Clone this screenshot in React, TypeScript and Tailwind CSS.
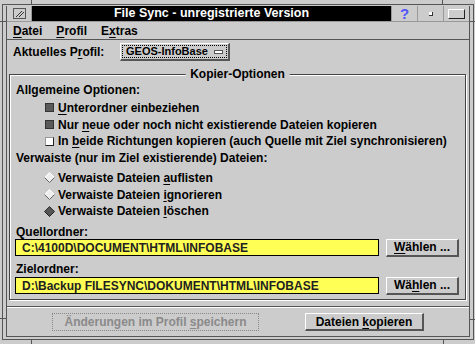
import type { ReactNode } from "react";

function U({ children }: { children: ReactNode }) {
  return <span className="underline decoration-1 underline-offset-[2px]">{children}</span>;
}

function CheckBox({ checked }: { checked: boolean }) {
  if (checked) {
    return <span className="block w-[9px] h-[9px] bg-[#5a5a5a] border border-[#333]" />;
  }
  return (
    <span className="block w-[9px] h-[9px] bg-white border border-t-[#999] border-l-[#999] border-r-[#222] border-b-[#222]" />
  );
}

function Radio({ on }: { on: boolean }) {
  return (
    <svg width="11" height="11" viewBox="0 0 11 11" className="block">
      <polygon points="5.5,0.5 10.5,5.5 5.5,10.5 0.5,5.5" fill={on ? "#555" : "#eeeeee"} />
      <polyline points="0.5,5.5 5.5,0.5 10.5,5.5" fill="none" stroke={on ? "#333" : "#ffffff"} />
      <polyline points="0.5,5.5 5.5,10.5 10.5,5.5" fill="none" stroke={on ? "#222" : "#666"} />
    </svg>
  );
}

const raised =
  "border-t border-l border-r-2 border-b-2 border-t-white border-l-white border-r-[#555] border-b-[#555] bg-[#cccccc]";

const options = [
  { checked: true, label: <><U>U</U>nterordner einbeziehen</> },
  { checked: true, label: <>Nur <U>n</U>eue oder noch nicht existierende Dateien kopieren</> },
  { checked: false, label: <>In <U>b</U>eide Richtungen kopieren (auch Quelle mit Ziel synchronisieren)</> },
];

const orphans = [
  { on: false, label: <>Verwaiste Dateien <U>a</U>uflisten</> },
  { on: false, label: <>Verwaiste Dateien <U>i</U>gnorieren</> },
  { on: true, label: <>Verwaiste Dateien <U>l</U>öschen</> },
];

function FolderRow({ path, button }: { path: string; button: ReactNode }) {
  return (
    <div className="flex items-center gap-[7px] pl-[5px] pr-[6px] h-[17px]">
      <div className="flex-1 h-[17px] bg-[#ffff55] border border-black flex items-center pl-[6px] text-[#222]">
        {path}
      </div>
      <button className={`${raised} w-[73px] h-[18px] flex items-center justify-center`}>
        <span>{button}</span>
      </button>
    </div>
  );
}

export default function App() {
  return (
    <div className="relative w-[475px] h-[344px] bg-[#cccccc] pt-[4px] pl-[2px] pr-[1px] pb-[4px] font-['Liberation_Sans',sans-serif] font-bold text-[12px] leading-none text-black select-none">
      {/* frame corner ticks */}
      <span className="absolute left-[31px] top-0 w-px h-[5px] bg-[#555]" />
      <span className="absolute left-[442px] top-0 w-px h-[5px] bg-[#555]" />
      <span className="absolute left-[31px] bottom-0 w-px h-[5px] bg-[#555]" />
      <span className="absolute left-[443px] bottom-0 w-px h-[5px] bg-[#555]" />
      <span className="absolute left-0 top-[21px] w-[6px] h-px bg-[#555]" />
      <span className="absolute right-0 top-[21px] w-[6px] h-px bg-[#555]" />
      <span className="absolute left-0 top-[318px] w-[6px] h-px bg-[#555]" />
      <span className="absolute right-0 top-[319px] w-[6px] h-px bg-[#555]" />

      <div className="h-full border border-[#555] pt-[1px] pl-[3px] pr-[3px] pb-[2px]">
        <div className="h-full border-l border-r border-b border-[#555] flex flex-col">
          {/* title bar */}
          <div className="h-[15px] flex gap-px bg-[#999]">
            <div className="w-[24px] bg-[#cccccc] flex items-center justify-center">
              <svg width="13" height="11" viewBox="0 0 13 11">
                <rect x="0.5" y="0.5" width="12" height="10" fill="#cccccc" stroke="#555" />
                <line x1="3" y1="9" x2="9" y2="3" stroke="#333" />
                <line x1="6" y1="9" x2="11" y2="4" stroke="#333" />
              </svg>
            </div>
            <div className="flex-1 bg-black text-white text-[12.5px] flex items-center justify-center">
              File Sync - unregistrierte Version
            </div>
            <div className="w-[25px] bg-[#cccccc] flex items-center justify-center text-[#5555ff] text-[15px]">?</div>
            <div className="w-[25px] bg-[#cccccc] flex items-center justify-center">
              <span className="block w-[4px] h-[4px] bg-white border-r border-b border-[#333]" />
            </div>
            <div className="w-[25px] bg-[#cccccc] flex items-center justify-center">
              <span className="block w-[17px] h-[10px] border border-t-white border-l-white border-r-[#222] border-b-[#222]" />
            </div>
          </div>

          {/* menu bar */}
          <div className="h-[19px] border-t border-[#999] border-b border-b-[#555] flex items-center gap-[14px] pl-[6px]">
            <span><U>D</U>atei</span>
            <span><U>P</U>rofil</span>
            <span>E<U>x</U>tras</span>
          </div>

          {/* current profile */}
          <div className="flex items-center pt-[3px] h-[21px]">
            <span className="w-[113px] pl-[6px]">Aktuelles P<U>r</U>ofil:</span>
            <button className={`${raised} w-[110px] h-[18px] p-px`}>
              <span className="h-full flex items-center justify-between border border-dotted border-black pl-[3px] pr-[3px] text-[11px]">
                <span>GEOS-InfoBase</span>
                <span className="block w-[9px] h-[4px] bg-white border border-[#555]" />
              </span>
            </button>
          </div>

          {/* Kopier-Optionen group */}
          <div className="relative mt-[13px] ml-[2px] mr-[3px] border border-[#444] shadow-[1px_1px_0_white,inset_1px_1px_0_white] pt-[6px] pb-[5px]">
            <span className="absolute -top-[7px] left-1/2 -translate-x-1/2 bg-[#cccccc] px-[5px]">Kopier-Optionen</span>

            <div className="h-[18px] flex items-center pl-[6px]">Allgemeine Optionen:</div>
            {options.map((o, i) => (
              <div key={i} className={`${i === 2 ? "h-[16px]" : "h-[17px]"} flex items-center gap-[4px] pl-[35px]`}>
                <CheckBox checked={o.checked} />
                <span>{o.label}</span>
              </div>
            ))}

            <div className="h-[18px] flex items-center pl-[6px]">Verwaiste (nur im Ziel existierende) Dateien:</div>
            <div className="mt-[2px]">
              {orphans.map((o, i) => (
                <div key={i} className={`${i === 2 ? "h-[16px]" : "h-[17px]"} flex items-center gap-[3px] pl-[34px]`}>
                  <Radio on={o.on} />
                  <span>{o.label}</span>
                </div>
              ))}
            </div>

            <div className="mt-[6px] h-[14px] flex items-center pl-[6px]">Quellordner:</div>
            <FolderRow path="C:\4100D\DOCUMENT\HTML\INFOBASE" button={<><U>W</U>ählen ...</>} />
            <div className="mt-[5px] h-[16px] flex items-center pl-[6px]">Zielordner:</div>
            <FolderRow path="D:\Backup FILESYNC\DOKUMENT\HTML\INFOBASE" button={<>Wä<U>h</U>len ...</>} />
          </div>

          {/* separator */}
          <div className="mt-[6px] border-t border-[#555] border-b border-b-white" />

          {/* bottom buttons */}
          <div className="flex items-center pt-[5px]">
            <button className="ml-[45px] w-[207px] h-[18px] border border-dotted border-[#888] text-[#8a8a8a] flex items-center justify-center">
              <span>Änderungen im Profil <U>s</U>peichern</span>
            </button>
            <button className={`${raised} ml-[46px] w-[119px] h-[18px] flex items-center justify-center`}>
              <span>Dateien <U>k</U>opieren</span>
            </button>
          </div>
        </div>
      </div>
    </div>
  );
}
